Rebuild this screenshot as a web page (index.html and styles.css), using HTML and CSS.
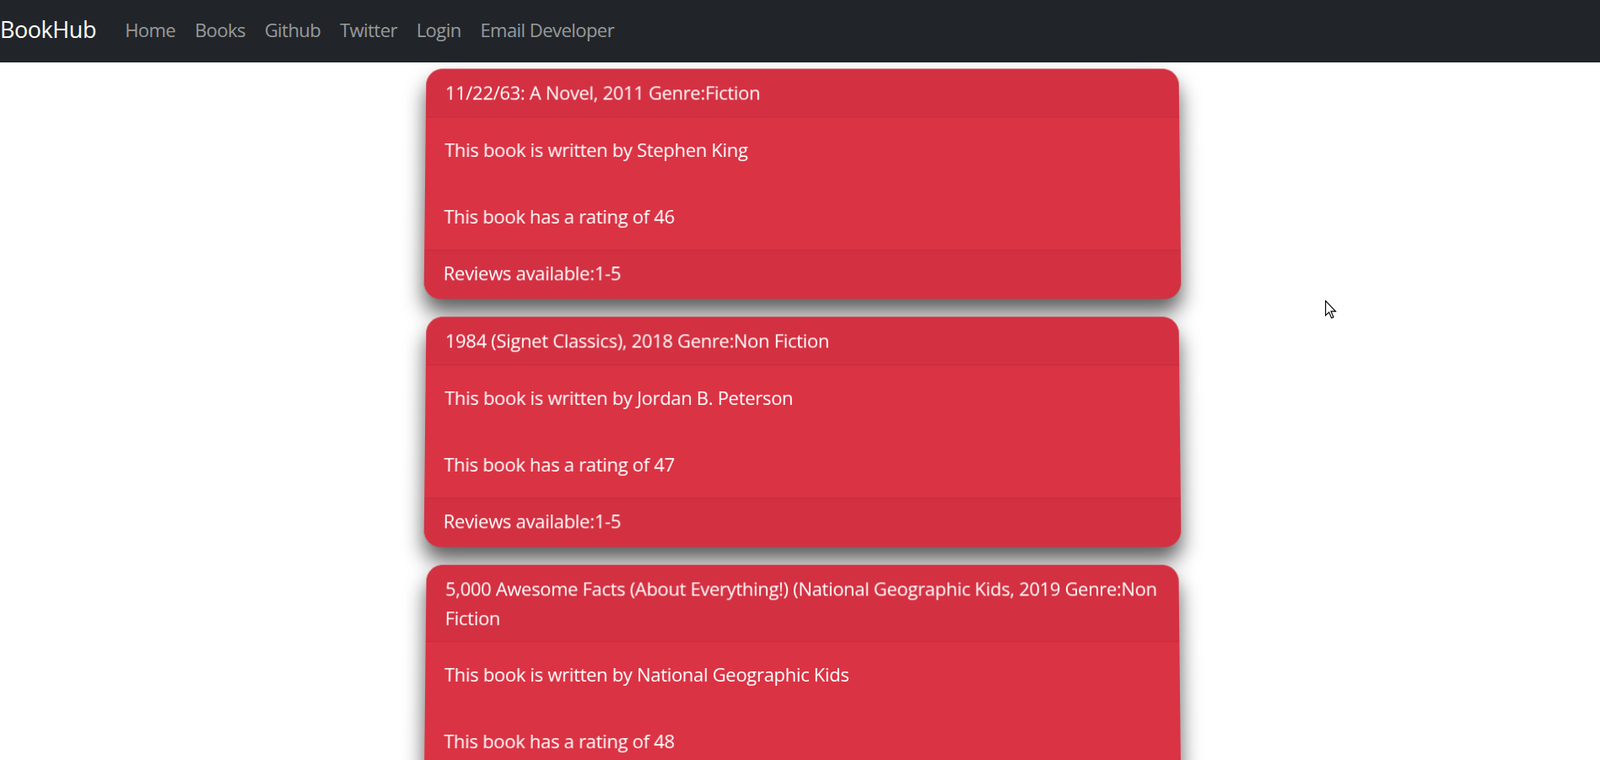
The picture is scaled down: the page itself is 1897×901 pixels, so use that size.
FILE: index.html
```html
<!DOCTYPE html>
<html lang="en">
<head>
<meta charset="utf-8">
<title>BookHub</title>
<link rel="stylesheet" href="styles.css">
</head>
<body>
<nav class="navbar">
  <a class="brand" href="#">BookHub</a>
  <ul class="nav-links">
    <li><a href="#">Home</a></li>
    <li><a href="#">Books</a></li>
    <li><a href="#">Github</a></li>
    <li><a href="#">Twitter</a></li>
    <li><a href="#">Login</a></li>
    <li><a href="#">Email Developer</a></li>
  </ul>
</nav>
<main class="list">
  <div class="card">
    <div class="card-header">11/22/63: A Novel, 2011 Genre:Fiction</div>
    <div class="card-body">
      <p class="card-title">This book is written by Stephen King</p>
      <p class="card-text">This book has a rating of 46</p>
    </div>
    <div class="card-footer">Reviews available:1-5</div>
  </div>
  <div class="card">
    <div class="card-header">1984 (Signet Classics), 2018 Genre:Non Fiction</div>
    <div class="card-body">
      <p class="card-title">This book is written by Jordan B. Peterson</p>
      <p class="card-text">This book has a rating of 47</p>
    </div>
    <div class="card-footer">Reviews available:1-5</div>
  </div>
  <div class="card">
    <div class="card-header">5,000 Awesome Facts (About Everything!) (National Geographic Kids, 2019 Genre:Non Fiction</div>
    <div class="card-body">
      <p class="card-title">This book is written by National Geographic Kids</p>
      <p class="card-text">This book has a rating of 48</p>
    </div>
    <div class="card-footer">Reviews available:1-5</div>
  </div>
</main>
<svg class="cursor" width="14" height="22" viewBox="0 0 12 19" aria-hidden="true">
  <path d="M0.5 0.5 L0.5 15.5 L4 12.2 L6.6 18.2 L8.6 17.3 L6.1 11.4 L10.8 11.4 Z" fill="#fff" stroke="#000" stroke-width="1" stroke-linejoin="miter"/>
</svg>
</body>
</html>
```
FILE: styles.css
```css
html, body {
  margin: 0;
  padding: 0;
  background: #fff;
}
body {
  font-family: "Open Sans", "Noto Sans", "Liberation Sans", sans-serif;
  font-size: 22px;
  letter-spacing: -0.3px;
  line-height: 34.2px;
  color: #212529;
  position: relative;
  min-height: 901px;
}
.navbar {
  display: flex;
  align-items: center;
  background: #212529;
  padding: 9.4px 0 13.4px;
  height: 51.6px;
}
.brand {
  color: #fff;
  text-decoration: none;
  font-size: 27px;
  letter-spacing: -0.45px;
  line-height: 42.75px;
  padding: 4.4px 0;
  margin-right: 22.8px;
}
.nav-links {
  display: flex;
  list-style: none;
  margin: 0;
  padding: 0;
}
.nav-links a {
  display: block;
  padding: 0 11.4px;
  letter-spacing: -0.55px;
  color: rgba(255, 255, 255, 0.55);
  text-decoration: none;
}
.list {
  display: flex;
  flex-direction: column;
  gap: 21px;
  width: 895px;
  margin: 7px auto 0;
  padding-left: 5px;
  padding-bottom: 40px;
}
.card {
  background: #da3344;
  color: #fff;
  border-radius: 20px;
  overflow: hidden;
  box-shadow: 0 16px 24px rgba(0, 0, 0, 0.64);
  transform: perspective(1000px) rotateX(1.4deg);
}
.card-header,
.card-footer {
  background: #d33142;
}
.card-header {
  padding: 11.4px 22.8px;
  border-bottom: 1px solid #c42c3b;
}
.card-footer {
  padding: 9.4px 22.8px 13.4px;
  border-top: 1px solid #c42c3b;
}
.card-body {
  padding: 20.8px 22.8px 22.8px;
}
.card-body p {
  margin: 0;
}
.card-title {
  margin-bottom: 45px !important;
}
.cursor {
  position: absolute;
  left: 1571px;
  top: 356px;
}
```
